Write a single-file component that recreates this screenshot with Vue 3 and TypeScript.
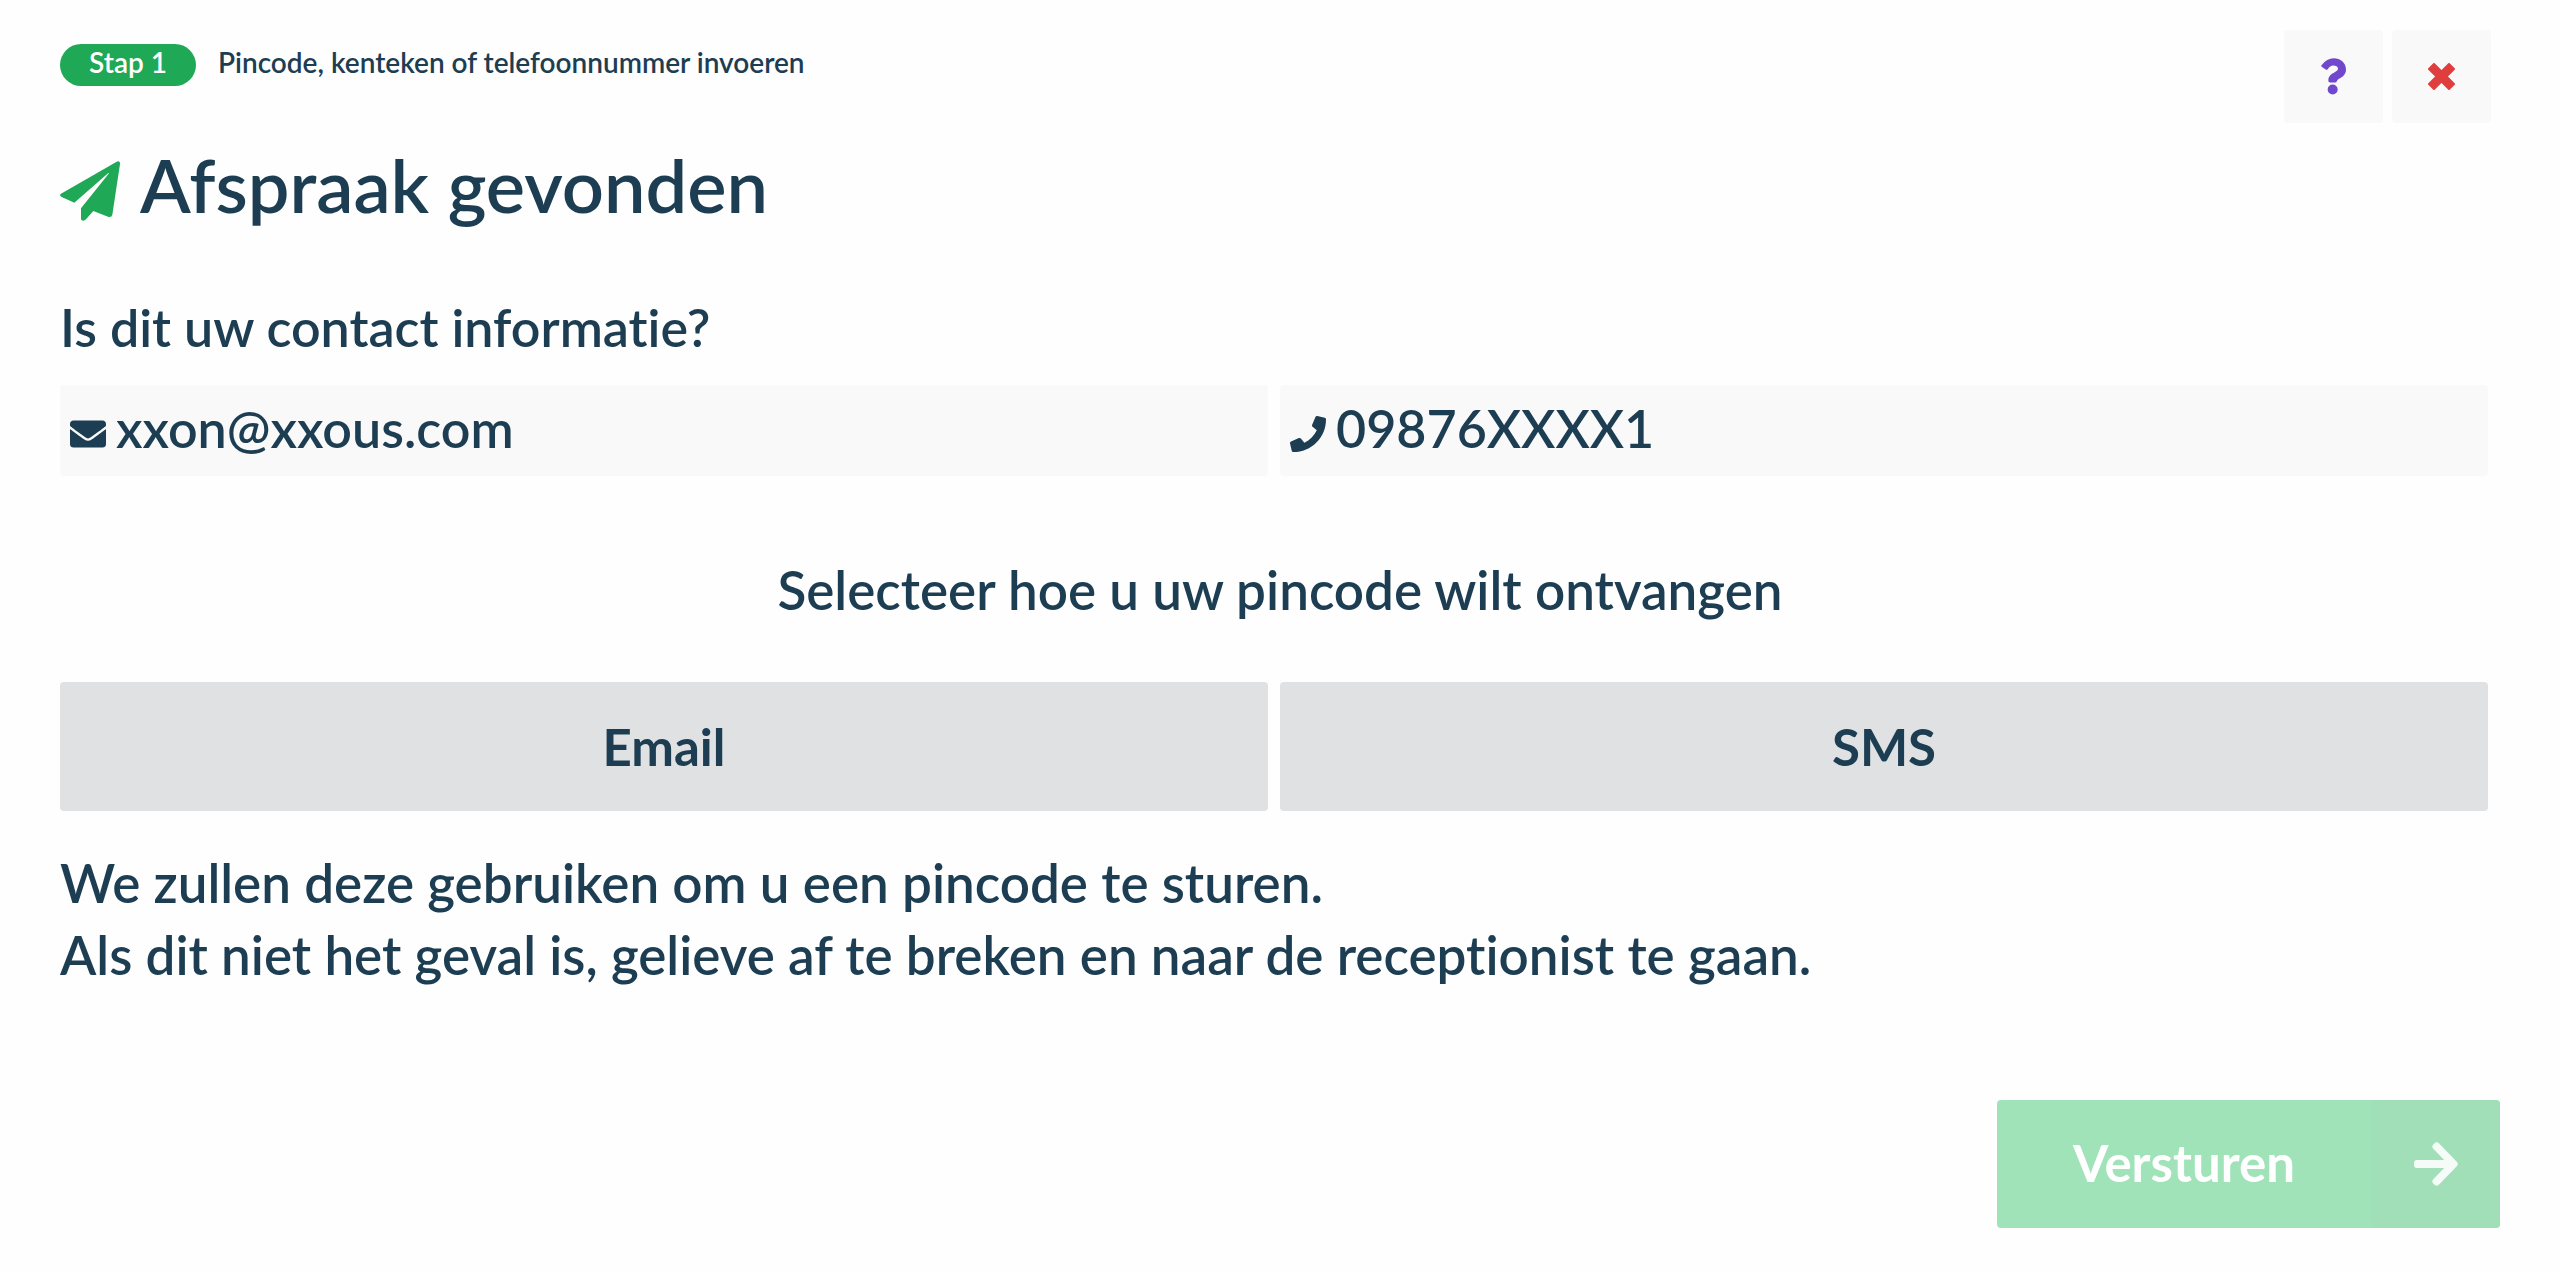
<script setup lang="ts">
import { ref } from 'vue'

type Method = 'email' | 'sms'

const methods: { id: Method; label: string }[] = [
  { id: 'email', label: 'Email' },
  { id: 'sms', label: 'SMS' },
]

const selected = ref<Method | null>(null)
</script>

<template>
  <main class="page">
    <header class="header">
      <div class="step">
        <span class="badge">Stap 1</span>
        <span class="step-name">Pincode, kenteken of telefoonnummer invoeren</span>
      </div>
      <div class="tools">
        <button class="tool help" type="button" aria-label="Help">
          <svg width="25" height="37" viewBox="0 0 75 110" fill="currentColor" aria-hidden="true">
            <path d="M3 20Q17 0 38 0C58 0 75 13 75 34C75 51 62 57 54 62Q48 65 47 70Q46 73 43 73H27Q22 73 22 67C22 52 32 47 41 42C48 38 51 36 51 31C51 26 44 22 37 22C29 22 26 26 20 33Q17 36 13 33L2 26Q-1 23 3 20Z" />
            <circle cx="35" cy="94" r="15" />
          </svg>
        </button>
        <button class="tool close" type="button" aria-label="Afbreken">
          <svg width="27" height="27" viewBox="0 0 81 81" fill="currentColor" stroke="currentColor" stroke-width="6" stroke-linejoin="round" aria-hidden="true">
            <path d="M18 3L40.500 25.500L63 3L78 18L55.500 40.500L78 63L63 78L40.500 55.500L18 78L3 63L25.500 40.500L3 18Z" />
          </svg>
        </button>
      </div>
    </header>

    <h1 class="title">
      <svg class="icon" width="60" height="60" viewBox="0 0 180 180" fill="currentColor" aria-hidden="true">
        <path d="M3 98L170 2Q181 -2 180 9L157 161Q155 170 146 168L100 150L78 175Q72 182 65 178Q63 176 63 172V142L146 38Q148 34 144 37L43 125L5 108Q-4 103 3 98Z" />
      </svg>
      <span>Afspraak gevonden</span>
    </h1>

    <h2 class="question">Is dit uw contact informatie?</h2>
    <div class="pair">
      <div class="contact">
        <svg class="icon" width="36" height="36" viewBox="0 0 512 512" fill="currentColor" aria-hidden="true">
          <path d="M502.300 190.800c3.900-3.100 9.700-.2 9.700 4.700V400c0 26.500-21.500 48-48 48H48c-26.500 0-48-21.500-48-48V195.600c0-5 5.700-7.800 9.700-4.700 22.400 17.400 52.100 39.500 154.100 113.600 21.100 15.400 56.700 47.800 92.200 47.600 35.700.3 72-32.800 92.300-47.600 102-74.100 131.600-96.300 154-113.700zM256 320c23.200.4 56.600-29.200 73.400-41.400 132.700-96.300 142.800-104.700 173.400-128.700 5.800-4.500 9.200-11.500 9.200-18.900v-19c0-26.500-21.500-48-48-48H48c-26.500 0-48 21.500-48 48v19c0 7.400 3.400 14.300 9.200 18.900 30.600 23.900 40.700 32.400 173.400 128.700 16.800 12.200 50.200 41.800 73.400 41.400z" />
        </svg>
        <span>xxon@xxous.com</span>
      </div>
      <div class="contact">
        <svg class="icon" width="36" height="36" viewBox="0 0 512 512" fill="currentColor" aria-hidden="true">
          <path d="M493.400 24.600l-104-24c-11.300-2.600-22.900 3.300-27.500 13.900l-48 112c-4.200 9.800-1.400 21.300 6.900 28l60.600 49.600c-36 76.700-98.900 140.500-177.200 177.200l-49.600-60.600c-6.800-8.300-18.200-11.100-28-6.900l-112 48C3.900 366.500-2 378.100.6 389.400l24 104C27.100 504.200 36.700 512 48 512c256.100 0 464-207.500 464-464 0-11.200-7.700-20.900-18.600-23.400z" />
        </svg>
        <span>09876XXXX1</span>
      </div>
    </div>

    <h2 class="choose">Selecteer hoe u uw pincode wilt ontvangen</h2>
    <div class="pair">
      <button
        v-for="method in methods"
        :key="method.id"
        class="method"
        type="button"
        :aria-pressed="selected === method.id"
        @click="selected = method.id"
      >
        {{ method.label }}
      </button>
    </div>

    <p class="note">
      We zullen deze gebruiken om u een pincode te sturen.<br />
      Als dit niet het geval is, gelieve af te breken en naar de receptionist te gaan.
    </p>

    <footer class="footer">
      <button class="send" type="button" :disabled="selected === null">
        <span class="send-label">Versturen</span>
        <span class="send-arrow">
          <svg width="44" height="44" viewBox="0 0 130 130" fill="currentColor" aria-hidden="true">
            <path d="M57 20Q50 13 59 5Q67 -3 75 5L127 59Q132 65 127 71L75 125Q67 133 59 125Q50 117 57 110L89 77H9Q0 77 0 68V62Q0 53 9 53H89Z" />
          </svg>
        </span>
      </button>
    </footer>
  </main>
</template>

<style>
body {
  background: #fefefe;
}
</style>

<style scoped>
.page {
  box-sizing: border-box;
  padding: 30px 60px 40px;
  color: #1c3d52;
  font-family: Lato, "Open Sans", sans-serif;
  font-size: 52px;
  font-weight: 600;
  line-height: 72px;
  font-variant-ligatures: none;
}

button {
  border: 0;
  padding: 0;
  font: inherit;
  cursor: pointer;
}

h1,
h2,
p {
  margin: 0;
  font-size: inherit;
  font-weight: inherit;
}

.icon {
  flex: none;
  margin-top: 12px;
}

.header {
  display: flex;
  justify-content: space-between;
  align-items: flex-start;
  margin-right: 9px;
}

.step {
  display: flex;
  align-items: flex-start;
  gap: 22px;
  padding-top: 14px;
  font-size: 28px;
  line-height: 36px;
}

.badge {
  padding: 0 29px 6px;
  border-radius: 21px;
  background: #1fa855;
  color: #fff;
}

.tools {
  display: flex;
  gap: 9px;
}

.tool {
  display: flex;
  align-items: center;
  justify-content: center;
  width: 99px;
  height: 93px;
  border-radius: 4px;
  background: #f9f9f9;
}

.help {
  color: #7148cd;
}

.close {
  color: #e03e3e;
}

.title {
  display: flex;
  align-items: center;
  gap: 20px;
  margin: 12px 0 56px;
  font-size: 74px;
  line-height: 100px;
}

.title .icon {
  color: #1fa855;
}

.question {
  margin-bottom: 22px;
}

.pair {
  display: grid;
  grid-template-columns: 1fr 1fr;
  gap: 12px;
  margin-right: 12px;
}

.contact {
  display: flex;
  align-items: center;
  gap: 10px;
  padding: 7px 10px 12px;
  border-radius: 4px;
  background: #f9f9f9;
}

.choose,
.note {
  font-size: 53px;
}

.choose {
  margin: 78px 0 56px;
  text-align: center;
}

.method {
  height: 129px;
  border-radius: 4px;
  background: #e0e1e2;
  color: inherit;
}

.method,
.send {
  font-size: 51px;
  font-weight: 700;
}

.note {
  margin-top: 36px;
}

.footer {
  display: flex;
  justify-content: flex-end;
  margin-top: 109px;
}

.send {
  display: flex;
  height: 128px;
  overflow: hidden;
  border-radius: 4px;
  background: #a0e3b9;
  color: #fff;
  line-height: 126px;
}

.send-label {
  padding: 0 76px;
}

.send-arrow {
  display: flex;
  align-items: center;
  align-self: stretch;
  justify-content: center;
  width: 129px;
  background: #a0dfb8;
  color: #f5fcf8;
}
</style>
